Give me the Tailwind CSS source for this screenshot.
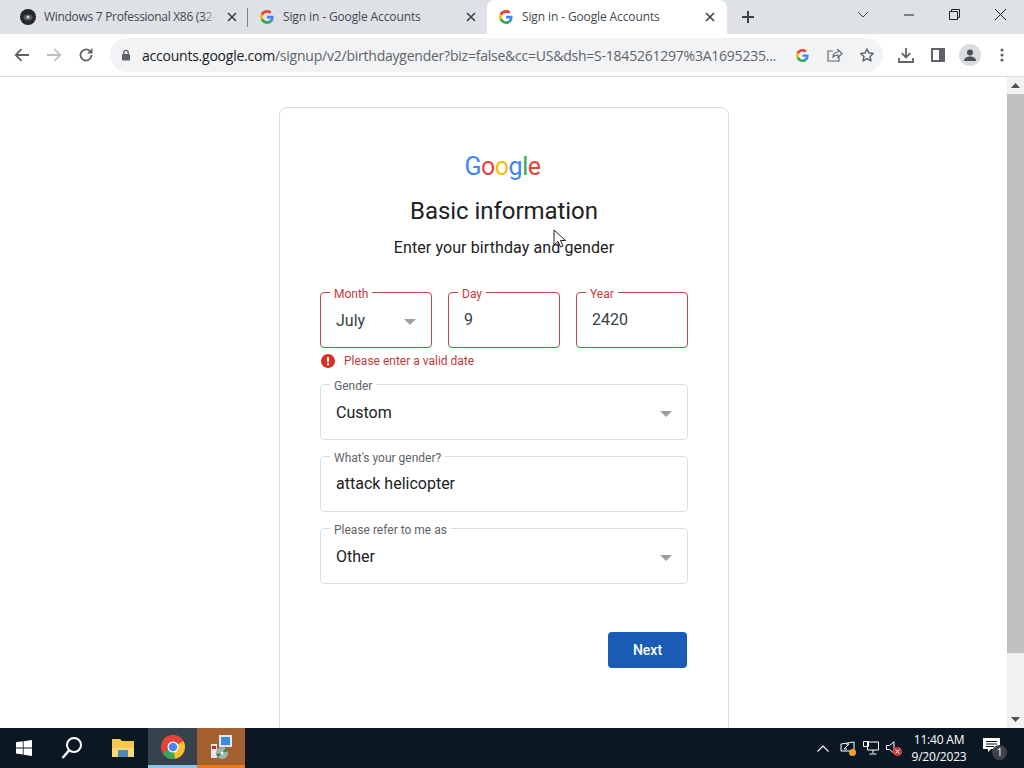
<!DOCTYPE html>
<html lang="en">
<head>
  <meta charset="UTF-8" />
  <title>Sign in - Google Accounts</title>
  <script src="https://cdn.jsdelivr.net/npm/@tailwindcss/browser@4"></script>
</head>
<body class="w-[1024px] h-[768px] overflow-hidden bg-white font-['Roboto',sans-serif] text-[#202124] flex flex-col">

  <!-- tab strip -->
  <div class="h-[34px] shrink-0 bg-[#dee1e6] flex items-center font-['Open_Sans',sans-serif] text-[12px] text-[#45494e]">
    <div class="w-[248px] h-full flex items-center pl-[20px] relative">
      <svg width="16" height="16" viewBox="0 0 16 16" class="shrink-0"><circle cx="8" cy="8" r="8" fill="#26282c"/><ellipse cx="8" cy="8.500" rx="4.500" ry="3" fill="#55585d"/><circle cx="8" cy="8" r="1.600" fill="#d5d6d8"/></svg>
      <div class="relative ml-[8px] w-[173px] overflow-hidden">
        <span class="block whitespace-nowrap tracking-[-0.3px]">Windows 7 Professional X86 (32-</span>
        <div class="absolute right-0 top-0 w-[14px] h-full bg-gradient-to-r from-transparent to-[#dee1e6]"></div>
      </div>
      <svg width="10" height="10" viewBox="0 0 10 10" class="ml-[10px]"><path d="M1 1l8 8M9 1l-8 8" stroke="#3c4043" stroke-width="1.600"/></svg>
      <div class="absolute right-0 top-[8px] w-px h-[19px] bg-[#7d8085]"></div>
    </div>
    <div class="w-[239px] h-full flex items-center pl-[12px]">
      <svg width="14" height="14" viewBox="0 0 48 48" class="shrink-0"><path fill="#EA4335" d="M24 9.500c3.500 0 6.700 1.300 9.200 3.500l6.800-6.800C35.900 2.400 30.300 0 24 0 14.600 0 6.500 5.400 2.600 13.200l7.900 6.100C12.400 13.700 17.700 9.500 24 9.500z"/><path fill="#4285F4" d="M46.500 24.500c0-1.600-.2-3.100-.4-4.500H24v9h12.700c-.6 2.900-2.200 5.400-4.700 7.100l7.700 6c4.500-4.200 6.800-10.300 6.800-17.600z"/><path fill="#FBBC05" d="M10.500 28.700c-.5-1.400-.8-3-.8-4.700s.3-3.200.8-4.700l-7.900-6.100C.9 16.500 0 20.100 0 24s.9 7.500 2.600 10.800l7.900-6.100z"/><path fill="#34A853" d="M24 48c6.500 0 11.900-2.100 15.700-5.900l-7.700-6c-2.100 1.400-4.800 2.300-8 2.300-6.300 0-11.600-4.200-13.500-9.800l-7.900 6.100C6.500 42.600 14.600 48 24 48z"/></svg>
      <span class="ml-[9px] w-[183px] whitespace-nowrap tracking-[-0.12px]">Sign in - Google Accounts</span>
      <svg width="10" height="10" viewBox="0 0 10 10"><path d="M1 1l8 8M9 1l-8 8" stroke="#3c4043" stroke-width="1.600"/></svg>
    </div>
    <div class="w-[240px] h-full bg-white rounded-t-[8px] flex items-center pl-[12px]">
      <svg width="14" height="14" viewBox="0 0 48 48" class="shrink-0"><path fill="#EA4335" d="M24 9.500c3.500 0 6.700 1.300 9.200 3.500l6.800-6.800C35.900 2.400 30.300 0 24 0 14.600 0 6.500 5.400 2.600 13.200l7.900 6.100C12.400 13.700 17.700 9.500 24 9.500z"/><path fill="#4285F4" d="M46.500 24.500c0-1.600-.2-3.100-.4-4.500H24v9h12.700c-.6 2.900-2.200 5.400-4.700 7.100l7.700 6c4.500-4.200 6.800-10.300 6.800-17.600z"/><path fill="#FBBC05" d="M10.500 28.700c-.5-1.400-.8-3-.8-4.700s.3-3.200.8-4.700l-7.900-6.100C.9 16.500 0 20.100 0 24s.9 7.500 2.600 10.800l7.900-6.100z"/><path fill="#34A853" d="M24 48c6.500 0 11.900-2.100 15.700-5.900l-7.700-6c-2.100 1.400-4.800 2.300-8 2.300-6.300 0-11.600-4.200-13.500-9.800l-7.900 6.100C6.500 42.600 14.600 48 24 48z"/></svg>
      <span class="ml-[9px] w-[183px] whitespace-nowrap tracking-[-0.12px]">Sign in - Google Accounts</span>
      <svg width="10" height="10" viewBox="0 0 10 10"><path d="M1 1l8 8M9 1l-8 8" stroke="#3c4043" stroke-width="1.600"/></svg>
    </div>
    <svg width="14" height="14" viewBox="0 0 14 14" class="ml-[14px]"><path d="M7 1v12M1 7h12" stroke="#3c4043" stroke-width="2"/></svg>
    <svg width="12" height="8" viewBox="0 0 12 8" class="ml-[102px] -mt-[5px]"><path d="M1 1l5 5 5-5" fill="none" stroke="#45494e" stroke-width="1"/></svg>
    <svg width="10" height="2" viewBox="0 0 10 2" class="ml-[35px] -mt-[4px]"><path d="M0 1h10" stroke="#202124" stroke-width="1"/></svg>
    <svg width="11" height="11" viewBox="0 0 11 11" class="ml-[35px] -mt-[5px]"><path d="M.5 2.500h8v8h-8zM2.500 2.500v-2h8v8h-2" fill="none" stroke="#202124" stroke-width="1"/></svg>
    <svg width="13" height="13" viewBox="0 0 13 13" class="ml-[34px] -mt-[5px]"><path d="M1 1l11 11M12 1L1 12" stroke="#202124" stroke-width="1"/></svg>
  </div>

  <!-- toolbar -->
  <div class="h-[43px] shrink-0 bg-white border-b border-[#dadce0] flex items-center font-['Open_Sans',sans-serif]">
    <svg width="16" height="14" viewBox="0 0 16 14" class="ml-[14px]"><path d="M15 7H2M7.500 1.200L1.700 7l5.800 5.800" fill="none" stroke="#5f6368" stroke-width="1.800"/></svg>
    <svg width="16" height="14" viewBox="0 0 16 14" class="ml-[16px]"><path d="M1 7h13M8.500 1.200L14.300 7l-5.800 5.800" fill="none" stroke="#bdc1c6" stroke-width="1.800"/></svg>
    <svg width="16" height="16" viewBox="0 0 16 16" class="ml-[16px]"><path d="M13.500 8a5.500 5.500 0 1 1-1.700-4" fill="none" stroke="#5f6368" stroke-width="1.800"/><path d="M14.500 1v5.500H9z" fill="#5f6368"/></svg>
    <div class="w-[773px] h-[34px] ml-[16px] rounded-full bg-[#f1f3f4] flex items-center pl-[11px] relative">
      <svg width="10" height="12" viewBox="0 0 10 12" class="shrink-0"><rect x="1" y="5" width="8" height="6.500" rx="1" fill="#5f6368"/><path d="M2.800 5V3.500a2.200 2.200 0 0 1 4.400 0V5" fill="none" stroke="#5f6368" stroke-width="1.300"/></svg>
      <span class="ml-[11px] w-[635px] overflow-hidden whitespace-nowrap text-[14px] tracking-[-0.23px] text-[#5f6368]"><span class="text-[#202124]">accounts.google.com</span>/signup/v2/birthdaygender?biz=false&amp;cc=US&amp;dsh=S-1845261297%3A1695235...</span>
      <svg width="13" height="13" viewBox="0 0 48 48" class="ml-[19px] shrink-0"><path fill="#EA4335" d="M24 9.500c3.500 0 6.700 1.300 9.200 3.500l6.800-6.800C35.900 2.400 30.300 0 24 0 14.600 0 6.500 5.400 2.600 13.200l7.900 6.100C12.400 13.700 17.700 9.500 24 9.500z"/><path fill="#4285F4" d="M46.500 24.500c0-1.600-.2-3.100-.4-4.500H24v9h12.700c-.6 2.900-2.200 5.400-4.700 7.100l7.700 6c4.500-4.200 6.800-10.300 6.800-17.600z"/><path fill="#FBBC05" d="M10.500 28.700c-.5-1.400-.8-3-.8-4.700s.3-3.200.8-4.700l-7.900-6.100C.9 16.500 0 20.100 0 24s.9 7.500 2.600 10.800l7.900-6.100z"/><path fill="#34A853" d="M24 48c6.500 0 11.900-2.100 15.700-5.900l-7.700-6c-2.100 1.400-4.800 2.300-8 2.300-6.300 0-11.600-4.200-13.500-9.800l-7.900 6.100C6.500 42.600 14.600 48 24 48z"/></svg>
      <svg width="16" height="14" viewBox="0 0 16 14" class="ml-[18px] shrink-0"><path d="M6 3H1v10h11V9M6 9c0-3 2-5 5-5V1.500L15 5.500 11 9.500V7C9 7 7.500 7.500 6 9z" fill="none" stroke="#5f6368" stroke-width="1.100"/></svg>
      <svg width="16" height="16" viewBox="0 0 24 24" class="ml-[16px] shrink-0"><path d="M12 3l2.800 6.100 6.700.7-5 4.500 1.400 6.600L12 17.500l-5.900 3.400 1.400-6.600-5-4.500 6.700-.7z" fill="none" stroke="#5f6368" stroke-width="2.200" stroke-linejoin="round"/></svg>
    </div>
    <svg width="16" height="16" viewBox="0 0 16 16" class="ml-[15px]"><path d="M8 1v9M3.800 6.200L8 10.500l4.200-4.300M1 11v4h14v-4" fill="none" stroke="#5f6368" stroke-width="1.800"/></svg>
    <svg width="14" height="14" viewBox="0 0 14 14" class="ml-[17px]"><path d="M1 1h12v12H1z" fill="none" stroke="#5f6368" stroke-width="2"/><rect x="8" y="1" width="5" height="12" fill="#5f6368"/></svg>
    <div class="ml-[14px] w-[22px] h-[22px] rounded-full bg-[#dadce0] flex items-center justify-center">
      <svg width="14" height="14" viewBox="0 0 14 14"><circle cx="7" cy="4.500" r="3" fill="#4b4e52"/><path d="M1 13c0-3 3-4.500 6-4.500s6 1.500 6 4.500z" fill="#4b4e52"/></svg>
    </div>
    <svg width="4" height="14" viewBox="0 0 4 14" class="ml-[19px]"><circle cx="2" cy="2" r="1.600" fill="#5f6368"/><circle cx="2" cy="7" r="1.600" fill="#5f6368"/><circle cx="2" cy="12" r="1.600" fill="#5f6368"/></svg>
  </div>

  <!-- page area -->
  <div class="flex-1 min-h-0 flex overflow-hidden">
    <div class="flex-1 min-w-0 overflow-hidden pt-[30px] pl-[279px]">
      <div class="w-[450px] h-[700px] border border-[#dadce0] rounded-[8px] px-[40px] pt-[45px] flex flex-col">
        <div class="relative flex flex-col items-center">
          <div class="h-[26px] -ml-[3px] flex items-center text-[25px] font-normal tracking-[-0.5px] leading-none">
            <span class="text-[#4285f4]">G</span><span class="text-[#ea4335]">o</span><span class="text-[#fbbc05]">o</span><span class="text-[#4285f4]">g</span><span class="text-[#34a853]">l</span><span class="text-[#ea4335]">e</span>
          </div>
          <h1 class="mt-[17px] h-[30px] text-[24px] leading-[30px] tracking-[-0.05px] font-normal">Basic information</h1>
          <p class="mt-[10px] h-[24px] text-[16px] leading-[24px] tracking-[0.1px]">Enter your birthday and gender</p>
          <!-- mouse pointer -->
          <svg width="14" height="20" viewBox="0 0 14 20" class="absolute left-[233px] top-[76px]"><path d="M1 1v15l4-3.500 2.500 5.500 2.500-1-2.500-5.500h5z" fill="#fff" stroke="#202124" stroke-width="1"/></svg>
        </div>

        <div class="mt-[32px] grid grid-cols-3 gap-x-[16px] w-[368px]">
          <div class="relative h-[56px] border border-[#b5474b] rounded-[4px] pl-[15px] pr-[15px] flex items-center justify-between text-[16px]">
            <label class="absolute -top-[6px] left-[9px] bg-white px-[4px] text-[12px] leading-[14px] text-[#c5393a]">Month</label>
            <span class="mt-[1px] text-[#3c4043]">July</span>
            <svg width="12" height="6" viewBox="0 0 12 6" class="mt-[3px]"><path d="M0 0h12L6 6z" fill="#9aa0a6"/></svg>
          </div>
          <div class="relative h-[56px] border border-[#b5474b] rounded-[4px] pl-[15px] flex items-center text-[16px]">
            <label class="absolute -top-[6px] left-[9px] bg-white px-[4px] text-[12px] leading-[14px] text-[#c5393a]">Day</label>
            <span class="text-[#3c4043]">9</span>
          </div>
          <div class="relative h-[56px] border border-[#b5474b] rounded-[4px] pl-[15px] flex items-center text-[16px]">
            <label class="absolute -top-[6px] left-[9px] bg-white px-[4px] text-[12px] leading-[14px] text-[#c5393a]">Year</label>
            <span class="text-[#3c4043]">2420</span>
          </div>
        </div>

        <div class="h-[36px] flex items-start pt-[6px] pl-[1px] text-[12px] leading-[14px] text-[#c5393a]">
          <svg width="14" height="14" viewBox="0 0 14 14" class="shrink-0"><circle cx="7" cy="7" r="7" fill="#d93025"/><rect x="6" y="3" width="2" height="5" fill="#fff"/><rect x="6" y="9.200" width="2" height="2" fill="#fff"/></svg>
          <span class="ml-[9px]">Please enter a valid date</span>
        </div>

        <div class="flex flex-col gap-[16px] w-[368px]">
          <div class="relative h-[56px] border border-[#dadce0] rounded-[4px] pl-[15px] pr-[15px] flex items-center justify-between text-[16px]">
            <label class="absolute -top-[6px] left-[9px] bg-white px-[4px] text-[12px] leading-[14px] text-[#5f6368]">Gender</label>
            <span class="mt-[1px] text-[#202124]">Custom</span>
            <svg width="12" height="6" viewBox="0 0 12 6" class="mt-[3px]"><path d="M0 0h12L6 6z" fill="#9aa0a6"/></svg>
          </div>
          <div class="relative h-[56px] border border-[#dadce0] rounded-[4px] pl-[15px] flex items-center text-[16px]">
            <label class="absolute -top-[6px] left-[9px] bg-white px-[4px] text-[12px] leading-[14px] text-[#5f6368]">What's your gender?</label>
            <span class="-mt-[1px] text-[#202124]">attack helicopter</span>
          </div>
          <div class="relative h-[56px] border border-[#dadce0] rounded-[4px] pl-[15px] pr-[15px] flex items-center justify-between text-[16px]">
            <label class="absolute -top-[6px] left-[9px] bg-white px-[4px] text-[12px] leading-[14px] text-[#5f6368]">Please refer to me as</label>
            <span class="mt-[1px] text-[#202124]">Other</span>
            <svg width="12" height="6" viewBox="0 0 12 6" class="mt-[3px]"><path d="M0 0h12L6 6z" fill="#9aa0a6"/></svg>
          </div>
        </div>

        <div class="mt-[48px] w-[367px] flex justify-end">
          <button class="w-[79px] h-[36px] rounded-[4px] bg-[#1a5cb5] text-white text-[14px] font-medium">Next</button>
        </div>
      </div>
    </div>

    <!-- scrollbar -->
    <div class="w-[17px] shrink-0 bg-[#f1f1f1] flex flex-col items-center">
      <div class="h-[17px] flex items-center justify-center">
        <svg width="9" height="5" viewBox="0 0 9 5"><path d="M0 5l4.500-5L9 5z" fill="#505050"/></svg>
      </div>
      <div class="w-full h-[559px] bg-[#c1c1c1]"></div>
      <div class="mt-auto h-[17px] flex items-center justify-center">
        <svg width="9" height="5" viewBox="0 0 9 5"><path d="M0 0l4.500 5L9 0z" fill="#505050"/></svg>
      </div>
    </div>
  </div>

  <!-- taskbar -->
  <div class="h-[40px] shrink-0 bg-[#0b1824] flex items-center text-white font-['Open_Sans',sans-serif]">
    <svg width="16" height="16" viewBox="0 0 16 16" class="ml-[16px]"><path d="M0 2.300l6.800-1v6.200H0zM7.600 1.200L16 0v7.500H7.600zM0 8.400h6.800v6.200l-6.800-1zM7.600 8.400H16V16l-8.400-1.200z" fill="#fff"/></svg>
    <svg width="22" height="24" viewBox="0 0 22 24" class="ml-[29px]"><circle cx="13" cy="9" r="7" fill="none" stroke="#fff" stroke-width="2"/><path d="M8 14.500L1.500 22" stroke="#fff" stroke-width="2.500"/></svg>
    <svg width="22" height="18" viewBox="0 0 22 18" class="ml-[29px]"><path d="M0 0h8l2 2h12v16H0z" fill="#f6c94e"/><rect x="0" y="9" width="22" height="9" fill="#f8d775"/><rect x="6" y="11" width="10" height="7" fill="#4a8ab5"/></svg>
    <div class="ml-[14px] w-[49px] h-[40px] bg-[#36434d] border-b-[3px] border-[#8cc4ea] flex items-center justify-center">
      <svg width="24" height="24" viewBox="0 0 24 24"><circle cx="12" cy="12" r="12" fill="#e0443a"/><path d="M12 12L1.600 18A12 12 0 0 0 14 23.800z" fill="#3aa757"/><path d="M12 12l10.400-6A12 12 0 0 1 14 23.800z" fill="#fbc02d"/><path d="M12 6h10.400A12 12 0 0 0 1.600 6L7 15z" fill="#e0443a"/><circle cx="12" cy="12" r="5.500" fill="#fff"/><circle cx="12" cy="12" r="4.300" fill="#4285f4"/></svg>
    </div>
    <div class="w-[48px] h-[40px] bg-[#a5602f] border-b-[3px] border-[#ee7a1f] flex items-center justify-center">
      <svg width="24" height="26" viewBox="0 0 24 26"><rect x="10" y="1" width="13" height="12" fill="#dfe7ef"/><rect x="12" y="3" width="9" height="8" fill="#3d8be0"/><rect x="2" y="10" width="6" height="14" fill="#e6e6e6"/><rect x="3" y="12" width="4" height="3" fill="#a33"/><circle cx="13" cy="19" r="6" fill="#9fb4a8"/><path d="M13 19l4-5 2 3zM13 19l-4 4-2-3z" fill="#3c7a4e"/><circle cx="13" cy="19" r="1.500" fill="#fff"/></svg>
    </div>
    <svg width="12" height="7" viewBox="0 0 12 7" class="ml-[572px]"><path d="M.5 6.500L6 1l5.500 5.500" fill="none" stroke="#fff" stroke-width="1.100"/></svg>
    <div class="relative ml-[11px] w-[16px] h-[15px]">
      <svg width="15" height="14" viewBox="0 0 15 14"><path d="M1 3l13-2v9H1z" fill="none" stroke="#fff" stroke-width="1"/><path d="M4 8l5-5M9 3H6M4 8h3" stroke="#fff" stroke-width="1" fill="none"/></svg>
      <div class="absolute right-0 bottom-0 w-[7px] h-[7px] rounded-full bg-[#f0a030]"></div>
    </div>
    <svg width="16" height="14" viewBox="0 0 16 14" class="ml-[7px]"><path d="M4.500 1h11v8h-11zM.5.500h5v5h-5zM10 9v3M6.500 13h7" fill="none" stroke="#fff" stroke-width="1"/></svg>
    <div class="relative ml-[7px] w-[16px] h-[15px]">
      <svg width="9" height="13" viewBox="0 0 9 13"><path d="M.5 4.500h3L8 .8v11.400L3.500 8.500h-3z" fill="none" stroke="#fff" stroke-width="1"/></svg>
      <svg width="9" height="9" viewBox="0 0 9 9" class="absolute right-0 bottom-0"><circle cx="4.500" cy="4.500" r="4.500" fill="#d8343c"/><path d="M2.500 2.500l4 4M6.500 2.500l-4 4" stroke="#fff" stroke-width="1"/></svg>
    </div>
    <div class="ml-[6px] w-[62px] flex flex-col items-center text-[12px] leading-[17px] whitespace-nowrap tracking-[-0.2px]">
      <span>11:40 AM</span>
      <span>9/20/2023</span>
    </div>
    <div class="relative ml-[13px] w-[20px] h-[20px]">
      <svg width="17" height="15" viewBox="0 0 17 15"><path d="M0 0h17v11H8l-3 3v-3H0z" fill="#fff"/><path d="M3 3.500h11M3 6h11M3 8.500h8" stroke="#0b1824" stroke-width="1"/></svg>
      <div class="absolute -right-[4px] -bottom-[2px] w-[15px] h-[15px] rounded-full bg-[#3f4347] text-[10px] leading-[15px] text-center">1</div>
    </div>
  </div>
</body>
</html>
